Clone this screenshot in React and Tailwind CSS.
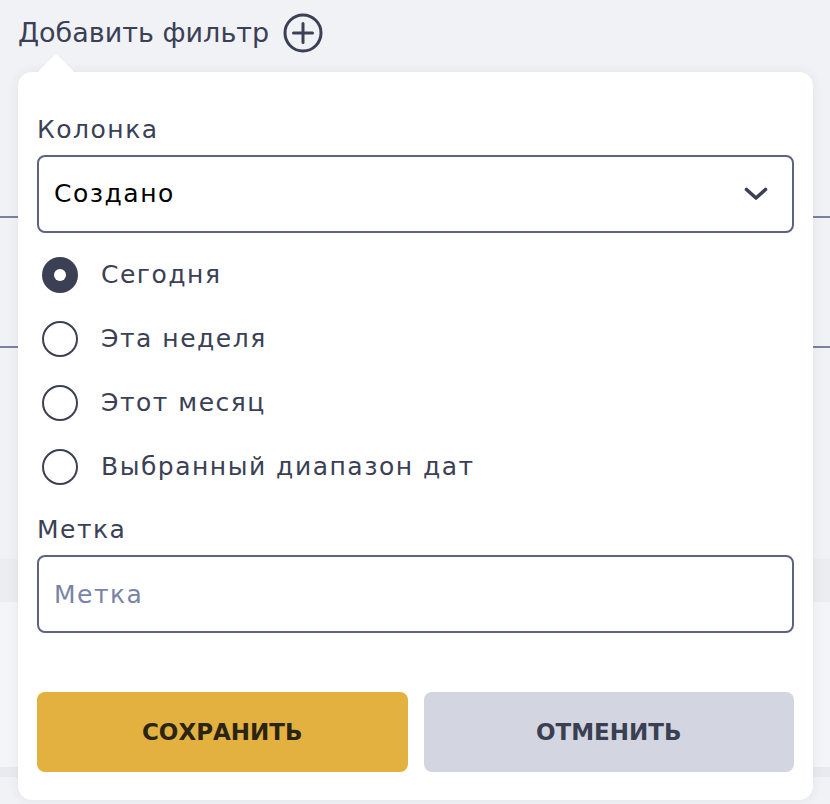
import { useState } from 'react';

const opcoes = ['Сегодня', 'Эта неделя', 'Этот месяц', 'Выбранный диапазон дат'];

function PlusCircle() {
  return (
    <svg width="40" height="40" viewBox="0 0 40 40" fill="none" stroke="#3b4055" strokeWidth="3" strokeLinecap="round">
      <circle cx="20" cy="20" r="18" />
      <path d="M20 10.5v19M10.5 20h19" />
    </svg>
  );
}

function Chevron() {
  return (
    <svg width="24" height="14" viewBox="0 0 24 14" fill="none" stroke="#3b4055" strokeWidth="3.6" strokeLinecap="round" strokeLinejoin="round">
      <path d="M2.5 2.5L12 11L21.5 2.5" />
    </svg>
  );
}

function Radio({ checked, label, onClick }) {
  return (
    <button onClick={onClick} className="flex h-16 items-center gap-[23px] pl-[5px] text-left">
      {checked ? (
        <span className="flex h-9 w-9 items-center justify-center rounded-full bg-[#3b4055]">
          <span className="h-3 w-3 rounded-full bg-white" />
        </span>
      ) : (
        <span className="h-9 w-9 rounded-full border-2 border-[#3b4055]" />
      )}
      <span className="text-[25px] tracking-[1.5px] text-[#3b4055]">{label}</span>
    </button>
  );
}

export default function App() {
  const [periodo, setPeriodo] = useState(0);

  return (
    <div
      className="relative h-[804px] overflow-hidden bg-[#f1f2f6]"
      style={{ fontFamily: '"DejaVu Sans", sans-serif' }}
    >
      {/* cabecalho */}
      <div className="flex h-[66px] items-center gap-[14px] pl-[18px]">
        <span className="text-[27px] text-[#3b4055]">Добавить фильтр</span>
        <PlusCircle />
      </div>

      {/* conteudo da pagina atras do popover */}
      <div className="mt-[150px] border-t-2 border-[#7b819e]" />
      <div className="mt-[128px] border-t-2 border-[#7b819e]" />
      <div className="mt-[211px] h-[43px] bg-[#ecedf1]" />
      <div className="h-[165px] bg-[#f4f5f8]" />
      <div className="h-[10px] bg-[#e9eaef]" />

      {/* popover */}
      <div className="absolute left-[18px] top-[72px] w-[795px] rounded-[14px] bg-white px-[19px] pb-[28px] pt-[42px] shadow-[0_0_12px_rgba(40,45,70,0.08)]">
        <div className="absolute -top-[13px] left-[25px] h-[26px] w-[26px] rotate-45 rounded-[3px] bg-white" />

        <div className="relative">
          <div className="h-8 text-[25px] leading-8 tracking-[1.5px] text-[#3b4055]">Колонка</div>
          <button className="mt-[9px] flex h-[78px] w-full items-center justify-between rounded-lg border-2 border-[#5c6482] pl-[15px] pr-[24px]">
            <span className="text-[25px] tracking-[1.5px] text-black">Создано</span>
            <Chevron />
          </button>

          <div className="mt-[10px] flex flex-col">
            {opcoes.map((op, i) => (
              <Radio key={op} label={op} checked={periodo === i} onClick={() => setPeriodo(i)} />
            ))}
          </div>

          <div className="mt-[15px] h-8 text-[25px] leading-8 tracking-[1.5px] text-[#3b4055]">Метка</div>
          <input
            placeholder="Метка"
            className="mt-[9px] h-[78px] w-full rounded-lg border-2 border-[#5c6482] px-[15px] text-[25px] tracking-[1.5px] text-black outline-none placeholder:text-[#7a84a6]"
          />

          <div className="mt-[59px] grid grid-cols-2 gap-4">
            <button className="h-20 rounded-lg bg-[#e3b13f] text-[23px] font-bold uppercase text-[#2b2414]">
              Сохранить
            </button>
            <button className="h-20 rounded-lg bg-[#d3d6e1] text-[23px] font-bold uppercase text-[#3a3f52]">
              Отменить
            </button>
          </div>
        </div>
      </div>
    </div>
  );
}
